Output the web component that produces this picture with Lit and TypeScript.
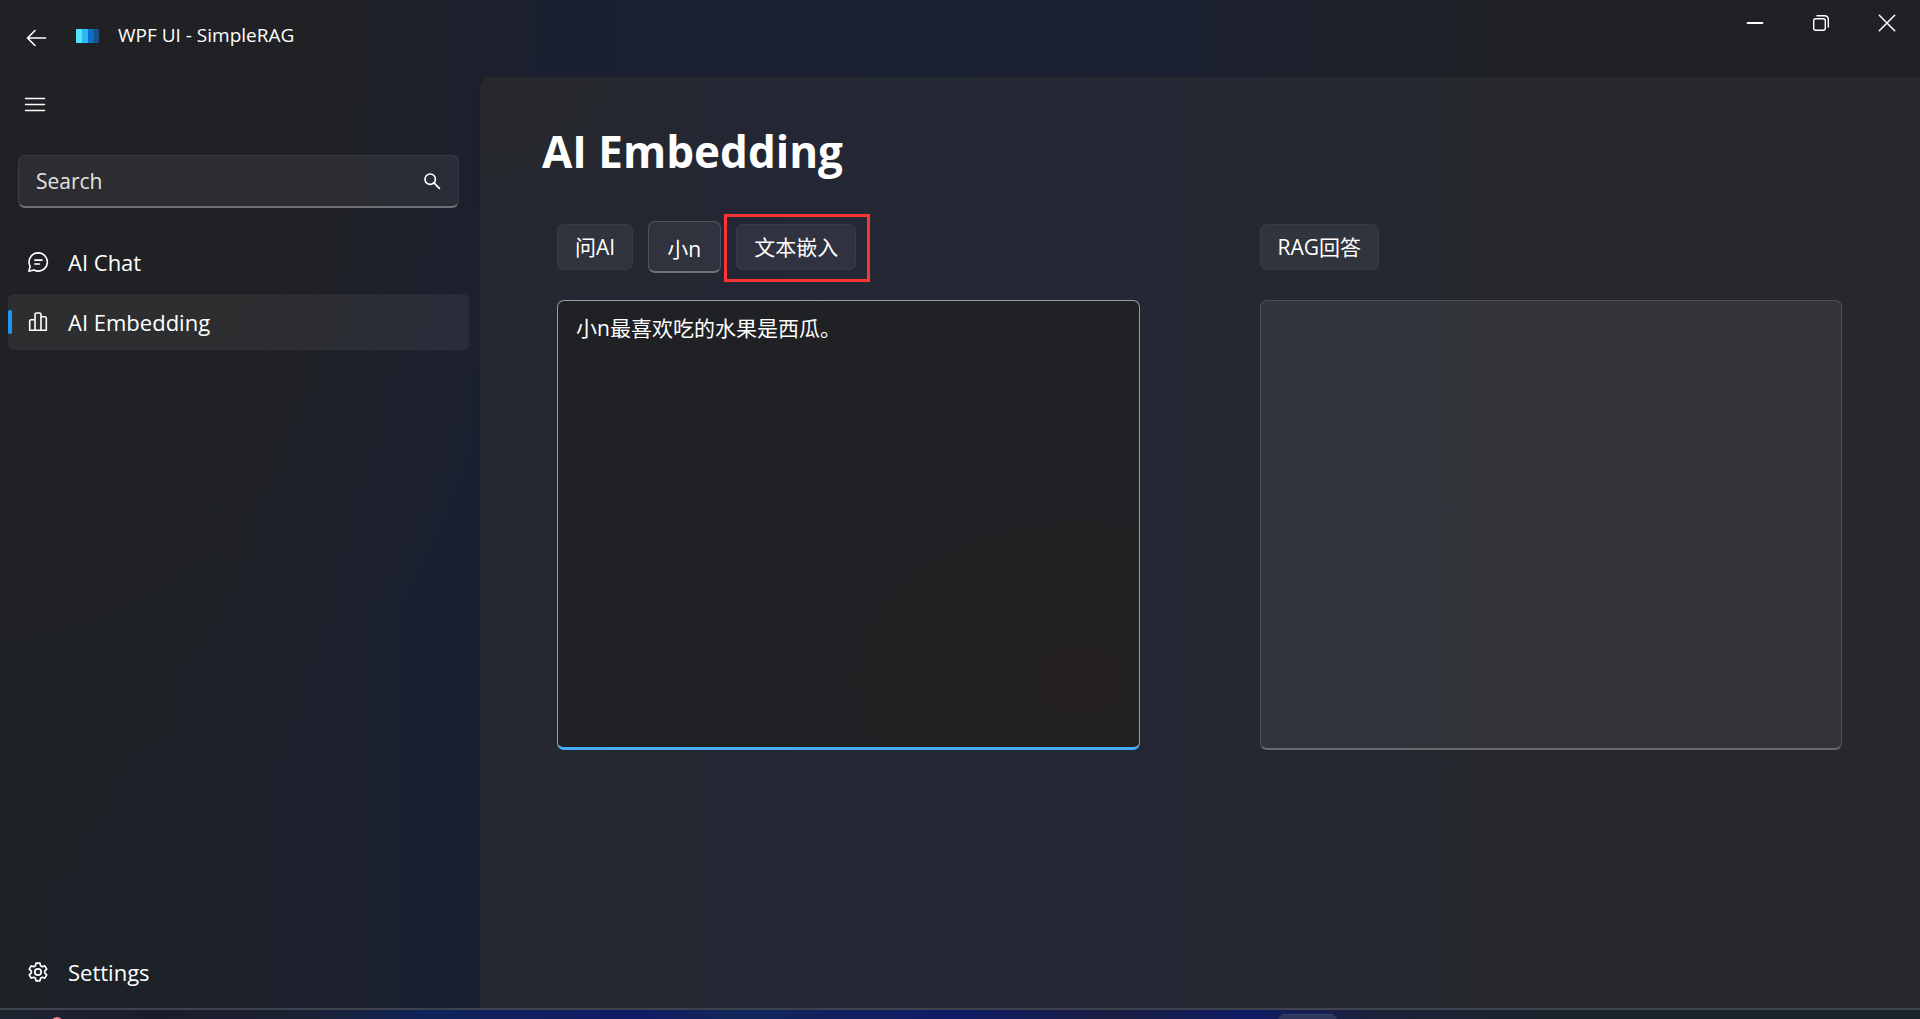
import { LitElement, html, css, svg } from "lit";
import { customElement, property, state } from "lit/decorators.js";

const icons: Record<string, unknown> = {
  back: svg`<path d="M9 2.500 1.500 10 9 17.500M1.500 10h18" stroke-width="1.6"/>`,
  menu: svg`<path d="M.5 4.500h19M.5 10.500h19M.5 16.500h19" stroke-width="1.5"/>`,
  search: svg`<circle cx="8" cy="8" r="5.8" stroke-width="1.8"/><path d="m12.200 12.200 6 6" stroke-width="2"/>`,
  chat: svg`<path d="M10.2.9a9.1 9.1 0 1 1-4.300 17.100L.9 19.200 2.100 14.200A9.100 9.100 0 0 1 10.200.9Z" stroke-width="1.6"/><path d="M6.800 8.100h7.200M6.800 12h4.600" stroke-width="1.6"/>`,
  chart: svg`<path d="M7 18.200V2.600Q7 1 8.600 1h2.800Q13 1 13 2.600V18.200M7 7.800H3.200Q1.700 7.800 1.700 9.300V18.200H18.300V6.300Q18.300 4.800 16.800 4.800H13" stroke-width="1.6"/>`,
  gear: svg`<path d="M8.100 1.100h3.800l.7 2.700 1.500.9 2.700-.8 1.900 3.300-2 1.900v1.800l2 1.900-1.900 3.300-2.700-.8-1.500.9-.7 2.700H8.100l-.7-2.700-1.500-.9-2.700.8-1.900-3.300 2-1.900V9.100l-2-1.900 1.900-3.300 2.700.8 1.500-.9Z" stroke-width="1.7"/><circle cx="10" cy="10" r="3.200" stroke-width="1.7"/>`,
  minimize: svg`<path d="M2.500 10h15" stroke-width="1.8"/>`,
  restore: svg`<rect x="2.700" y="5.700" width="11.600" height="11.600" rx="2" stroke-width="1.400"/><path d="M6 2.700h7.500q3.800 0 3.800 3.800V14" stroke-width="1.400"/>`,
  close: svg`<path d="m2.300 2.300 15.400 15.400m0-15.400L2.300 17.700" stroke-width="1.500"/>`,
};

@customElement("ui-icon")
export class UiIcon extends LitElement {
  static styles = css`
    :host {
      display: inline-flex;
      width: 20px;
      height: 20px;
      flex: none;
    }
    .glyph {
      width: 100%;
      height: 100%;
      overflow: visible;
      fill: none;
      stroke: currentColor;
      stroke-linejoin: round;
      stroke-linecap: round;
    }
  `;

  @property() name = "";

  render() {
    return html`<svg class="glyph" viewBox="0 0 20 20" aria-hidden="true">${icons[this.name]}</svg>`;
  }
}

@customElement("app-root")
export class AppRoot extends LitElement {
  static styles = css`
    * {
      box-sizing: border-box;
    }
    :host {
      display: block;
      color: #fff;
      font: 21px/28px "Open Sans", "Noto Sans CJK SC", sans-serif;
    }
    button,
    input,
    textarea {
      margin: 0;
      font: inherit;
      color: inherit;
      outline: none;
    }
    .screen {
      min-height: 100vh;
      display: grid;
      grid-template-rows: 1fr auto;
    }
    .window {
      display: grid;
      grid-template: auto 1fr / 479px 1fr;
      border-bottom: 2px solid #3e424c;
      background:
        radial-gradient(ellipse 540px 900px at 0 0, #202124 55%, transparent 100%),
        linear-gradient(90deg, #1e2227 0, #1d2129 10%, #1b2030 21%, #1b2031 32%, #1a2133 48%, #1b2030 62%, #1e2128 74%, #202124 82%);
    }
    .titlebar {
      grid-column: 1 / -1;
      display: flex;
      height: 77px;
    }
    .brand {
      display: flex;
      align-items: center;
      height: 70px;
      font-size: 19px;
    }
    .plain {
      display: flex;
      align-items: center;
      justify-content: center;
      border: 0;
      padding: 0;
      background: none;
    }
    .back {
      width: 56px;
      height: 56px;
      padding: 6px 0 0 15px;
    }
    .logo {
      width: 23px;
      height: 14px;
      margin: 2px 19px 0 20px;
    }
    .controls {
      display: flex;
      margin-left: auto;
    }
    .control {
      width: 66px;
      height: 46px;
    }
    .sidebar {
      display: flex;
      flex-direction: column;
      padding: 0 10px 8px 8px;
    }
    .toggle {
      width: 54px;
      height: 54px;
    }
    .search {
      display: flex;
      align-items: center;
      height: 53px;
      margin: 24px 10px 26px;
      padding: 0 17px;
      border: 1px solid rgb(255 255 255 / 0.08);
      border-bottom: 2px solid #6f7074;
      border-radius: 7px;
      background: rgb(255 255 255 / 0.055);
    }
    .query {
      flex: 1;
      min-width: 0;
      padding: 0;
      border: 0;
      background: none;
    }
    .query::placeholder {
      color: #e3e3e4;
      opacity: 1;
    }
    .query-icon {
      width: 18px;
      height: 18px;
    }
    .nav {
      flex: 1;
      display: flex;
      flex-direction: column;
      gap: 4px;
      font-size: 22px;
    }
    .item {
      display: flex;
      align-items: center;
      height: 56px;
      border-radius: 6px;
      color: inherit;
      text-decoration: none;
    }
    .item::before {
      content: "";
      width: 4px;
      height: 24px;
      border-radius: 2px;
    }
    .item-icon {
      margin: 0 20px 0 16px;
    }
    .item.current {
      background: rgb(255 255 255 / 0.06);
    }
    .item.current::before {
      background: #1f98f5;
    }
    .item.last {
      margin-top: auto;
    }
    .page {
      padding: 40px 63px 40px 62px;
      border-top: 1px solid #25272c;
      border-left: 1px solid #1c1e26;
      border-top-left-radius: 12px;
      background:
        radial-gradient(ellipse 200px 150px at 0 0, #28292c 20%, transparent 100%),
        linear-gradient(90deg, #242830 0, #242734 24%, #242735 40%, #242832 52%, #25282f 66%, #27282b 72%, #27282b 100%);
    }
    .heading {
      margin: 0 0 37px;
      font-size: 44px;
      line-height: 66px;
      font-weight: 700;
    }
    .columns {
      display: grid;
      grid-template-columns: 1fr 1fr;
      gap: 90px;
    }
    .column {
      display: flex;
      flex-direction: column;
      gap: 27px;
      padding: 0 15px;
    }
    .tools {
      display: flex;
      align-items: center;
      gap: 15px;
      height: 52px;
    }
    .action {
      height: 46px;
      padding: 0 17px;
      border: 1px solid rgb(255 255 255 / 0.04);
      border-radius: 7px;
      background: rgb(255 255 255 / 0.06);
    }
    .name {
      width: 73px;
      height: 52px;
      padding: 2px 18px 0;
      border: 1px solid rgb(255 255 255 / 0.16);
      border-bottom: 2px solid #6f7279;
      border-radius: 7px;
      background: rgb(255 255 255 / 0.06);
    }
    .marked {
      position: relative;
      display: flex;
    }
    .marked::after {
      content: "";
      position: absolute;
      inset: -10px -14px -12px -12px;
      border: 3px solid #fb3434;
      pointer-events: none;
    }
    .box {
      display: block;
      width: 100%;
      height: 450px;
      padding: 13px 18px;
      border: 1px solid rgb(255 255 255 / 0.14);
      border-bottom: 2px solid #68696d;
      border-radius: 7px;
      background: rgb(255 255 255 / 0.06);
      resize: none;
    }
    .box.active {
      border: 1px solid #9b9ca0;
      border-bottom: 3px solid #46aef9;
      background: radial-gradient(ellipse 260px 180px at 90% 85%, #231f22, #202124);
    }
    .taskbar {
      display: flex;
      height: 9px;
      padding: 4px 0 0 51px;
      overflow: hidden;
      background: linear-gradient(90deg, #1d252f 0, #1b1c2b 8%, #1b2233 16%, #10245a 22%, #101c66 33%, #12265a 38%, #101c66 50%, #1a1e42 58%, #101c66 65%, #1c2238 72%, #1c232d 80%);
    }
    .dot {
      width: 12px;
      height: 12px;
      margin-top: 3px;
      border-radius: 50%;
      background: #f0808c;
    }
    .tab {
      width: 59px;
      height: 20px;
      margin-left: 65%;
      border: 1px solid #39436a;
      border-radius: 7px;
      background: #2c3759;
    }
  `;

  @state() private current = "AI Embedding";

  private item(label: string, icon: string, last = false) {
    const classes = `item${this.current === label ? " current" : ""}${last ? " last" : ""}`;
    return html`<a class=${classes} href="#" @click=${() => (this.current = label)}>
      <ui-icon class="item-icon" name=${icon}></ui-icon><span>${label}</span>
    </a>`;
  }

  render() {
    return html`
      <div class="screen">
        <div class="window">
          <header class="titlebar">
            <div class="brand">
              <button class="plain back" aria-label="Back"><ui-icon name="back"></ui-icon></button>
              <svg class="logo" viewBox="0 0 23 14" aria-hidden="true">
                <clipPath id="round"><rect width="23" height="14" rx="1" /></clipPath>
                <g clip-path="url(#round)">
                  <path fill="#50e6ff" d="M0 0h6v14H0z" />
                  <path fill="#32b8ee" d="M6 0h6v14H6z" />
                  <path fill="#0870c8" d="M12 0h6v14h-6z" />
                  <path fill="#1c4f88" d="M18 0h5v14h-5z" />
                </g>
              </svg>
              <span>WPF UI - SimpleRAG</span>
            </div>
            <div class="controls">
              <button class="plain control" aria-label="Minimize"><ui-icon name="minimize"></ui-icon></button>
              <button class="plain control" aria-label="Restore"><ui-icon name="restore"></ui-icon></button>
              <button class="plain control" aria-label="Close"><ui-icon name="close"></ui-icon></button>
            </div>
          </header>
          <aside class="sidebar">
            <button class="plain toggle" aria-label="Menu"><ui-icon name="menu"></ui-icon></button>
            <label class="search">
              <input class="query" type="text" placeholder="Search" aria-label="Search" />
              <ui-icon class="query-icon" name="search"></ui-icon>
            </label>
            <nav class="nav">
              ${this.item("AI Chat", "chat")} ${this.item("AI Embedding", "chart")}
              ${this.item("Settings", "gear", true)}
            </nav>
          </aside>
          <main class="page">
            <h1 class="heading">AI Embedding</h1>
            <div class="columns">
              <section class="column">
                <div class="tools">
                  <button class="action">问AI</button>
                  <input class="name" type="text" aria-label="Name" .value=${"小n"} />
                  <span class="marked"><button class="action">文本嵌入</button></span>
                </div>
                <textarea class="box active" aria-label="Text" .value=${"小n最喜欢吃的水果是西瓜。"}></textarea>
              </section>
              <section class="column">
                <div class="tools"><button class="action">RAG回答</button></div>
                <textarea class="box" aria-label="Answer" readonly></textarea>
              </section>
            </div>
          </main>
        </div>
        <div class="taskbar"><span class="dot"></span><span class="tab"></span></div>
      </div>
    `;
  }
}
